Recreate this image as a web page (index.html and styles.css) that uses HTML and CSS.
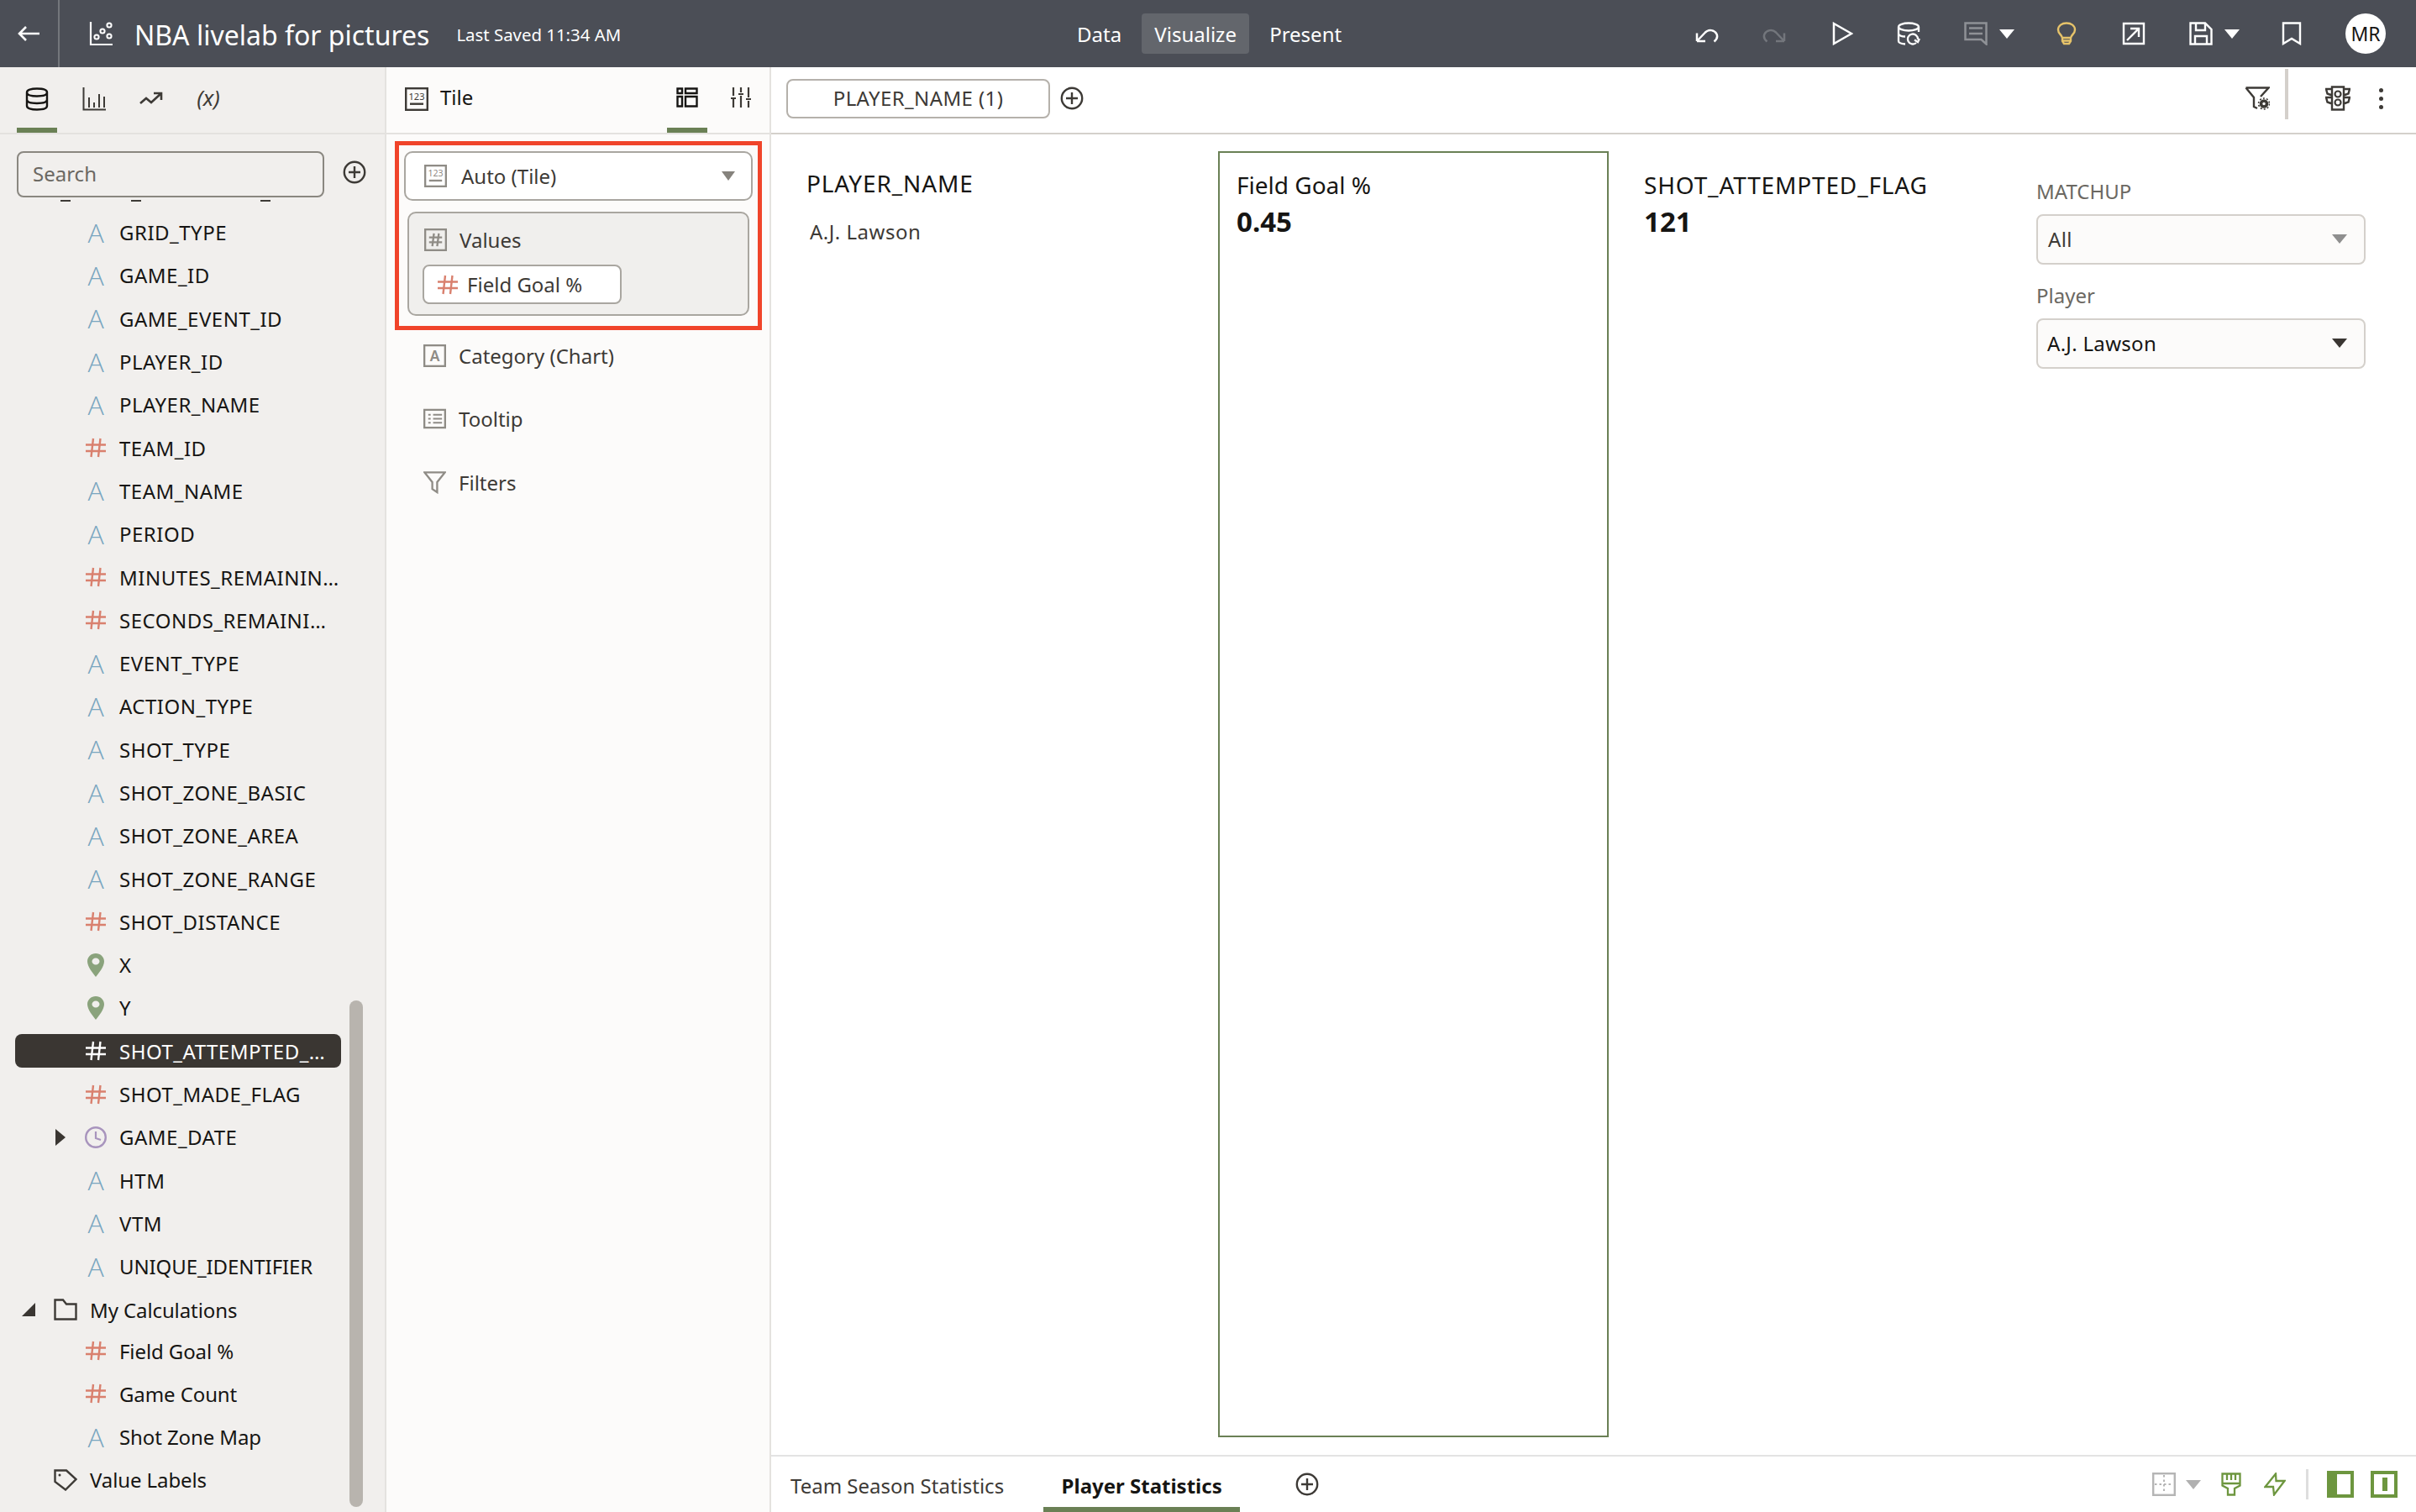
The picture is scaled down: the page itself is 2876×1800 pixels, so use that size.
FILE: index.html
```html
<!DOCTYPE html>
<html lang="en">
<head>
    <meta charset="UTF-8">
    <title>NBA livelab for pictures</title>
    <link rel="stylesheet" href="styles.css">
</head>
<body>
    <svg class="defs" width="0" height="0">
        <symbol id="hash" viewBox="0 0 24 24">
            <path d="M0 8.5H24M0 16H24M9 1L6.5 23M17.5 1L15 23" fill="none" stroke="currentColor" stroke-width="2.4"/>
        </symbol>
        <symbol id="pin" viewBox="0 0 20 28">
            <path fill-rule="evenodd" fill="currentColor" d="M10 0C4.5 0 0 4.2 0 9.5C0 15.5 6 23 10 28C14 23 20 15.5 20 9.5C20 4.2 15.500 0 10 0ZM10 5.500A4.500 4 0 1 1 10 13.500A4.500 4 0 1 1 10 5.500Z"/>
        </symbol>
        <symbol id="plus" viewBox="0 0 28 28">
            <circle cx="14" cy="14" r="12.200" fill="none" stroke="currentColor" stroke-width="2.400"/>
            <path d="M14 7V21M7 14H21" stroke="currentColor" stroke-width="2.400"/>
        </symbol>
    </svg>

    <div class="app">
        <header class="topbar">
            <div class="top-left">
                <div class="back">
                    <svg width="28" height="22" viewBox="0 0 28 22"><path d="M27 11H3M11 3L3 11L11 19" fill="none" stroke="#fff" stroke-width="2.600"/></svg>
                </div>
                <svg class="doc-icon" width="28" height="30" viewBox="0 0 28 30">
                    <path d="M2 1V28H28" fill="none" stroke="#fff" stroke-width="2.200"/>
                    <g fill="none" stroke="#fff" stroke-width="2"><circle cx="9" cy="19" r="2.600"/><circle cx="16" cy="12" r="2.600"/><circle cx="24" cy="18" r="2.600"/><circle cx="24" cy="5" r="2.600"/></g>
                </svg>
                <span class="doc-title">NBA livelab for pictures</span>
                <span class="saved">Last Saved 11:34 AM</span>
            </div>
            <nav class="modes">
                <span>Data</span>
                <span class="active">Visualize</span>
                <span>Present</span>
            </nav>
            <div class="top-right">
                <svg class="ti" viewBox="0 0 28 28"><path d="M2 23V13.500M2 23H12M2 23L12 12.500C16 8.500 23 9.500 25.500 14.500C27 18 25 21.500 22.500 23.500" fill="none" stroke="#fff" stroke-width="2.500"/></svg>
                <svg class="ti" viewBox="0 0 28 28"><path d="M26 23V13.500M26 23H16M26 23L16 12.500C12 8.500 5 9.500 2.500 14.500C1 18 3 21.500 5.500 23.500" fill="none" stroke="#73767c" stroke-width="2.500"/></svg>
                <svg class="ti" viewBox="0 0 28 28"><path d="M5 2L26 14L5 26Z" fill="none" stroke="#fff" stroke-width="2.500"/></svg>
                <svg class="ti" viewBox="0 0 28 28">
                    <ellipse cx="14" cy="6" rx="12" ry="4.500" fill="none" stroke="#fff" stroke-width="2.300"/>
                    <path d="M2 6V23C2 25 5 26 10 26.500M26 6V12M2 14.500C3 16.500 7 17.500 10 17.500" fill="none" stroke="#fff" stroke-width="2.300"/>
                    <path d="M25 21A6 6 0 1 0 23 25M27 20L25 24L21 21.500" fill="none" stroke="#fff" stroke-width="2.300"/>
                </svg>
                <div class="ti-group">
                    <svg class="ti" viewBox="0 0 28 28"><path d="M1.500 1.500H26.500V26.500L20.500 21H1.500Z M6 7.500H22M6 14H22" fill="none" stroke="#8f9196" stroke-width="2.500"/></svg>
                    <span class="caret caret-white"></span>
                </div>
                <svg class="ti" viewBox="0 0 28 28"><path d="M9 19C8 15 4 14 4 9.500C4 4.500 8.500 1.500 14 1.500C19.500 1.500 24 4.500 24 9.500C24 14 20 15 19 19ZM9 19V23L11 26H17L19 23V19M9 22.500H19" fill="none" stroke="#e6c36a" stroke-width="2.400"/></svg>
                <svg class="ti" viewBox="0 0 28 28"><path d="M2 2H26V26H2ZM6 22L20 8M10 8H20V18" fill="none" stroke="#fff" stroke-width="2.400"/></svg>
                <div class="ti-group">
                    <svg class="ti" viewBox="0 0 28 28"><path d="M1.500 1.500H19L26.500 9V26.500H1.500ZM8 2V10H19V2M7 26V17H21V26" fill="none" stroke="#fff" stroke-width="2.400"/></svg>
                    <span class="caret caret-white"></span>
                </div>
                <svg class="ti" viewBox="0 0 28 28"><path d="M4 1.500H24V26L14 20L4 26Z" fill="none" stroke="#fff" stroke-width="2.400"/></svg>
                <div class="avatar">MR</div>
            </div>
        </header>

        <div class="workspace">
            <aside class="data-panel">
                <div class="panel-tabs">
                    <div class="ptab on">
                        <svg width="28" height="28" viewBox="0 0 28 28"><path d="M2 6C2 3 7 1.500 14 1.500C21 1.500 26 3 26 6V22C26 25 21 26.500 14 26.500C7 26.500 2 25 2 22ZM2 6C2 9 7 10.500 14 10.500C21 10.500 26 9 26 6M2 14.500C2 17.500 7 19 14 19C21 19 26 17.500 26 14.500" fill="none" stroke="#161513" stroke-width="2.400"/></svg>
                    </div>
                    <div class="ptab">
                        <svg width="28" height="28" viewBox="0 0 28 28"><path d="M1.500 0V26.500H28M8 12V24M14 18V24M20 8V24M26 11V24" fill="none" stroke="#3d3a36" stroke-width="2"/></svg>
                    </div>
                    <div class="ptab">
                        <svg width="28" height="28" viewBox="0 0 28 28"><path d="M1 19L8 13L14 18L26 7M17 7H26V15" fill="none" stroke="#3d3a36" stroke-width="2.600"/></svg>
                    </div>
                    <div class="ptab vars">(x)</div>
                </div>
                <div class="search-row">
                    <div class="search">Search</div>
                    <svg class="add" width="28" height="28"><use href="#plus"/></svg>
                </div>
                <div class="clipped"><i></i><i></i><i></i></div>
                <div class="field-list">
                    <div class="row"><span class="ic-a">A</span><span>GRID_TYPE</span></div>
                    <div class="row"><span class="ic-a">A</span><span>GAME_ID</span></div>
                    <div class="row"><span class="ic-a">A</span><span>GAME_EVENT_ID</span></div>
                    <div class="row"><span class="ic-a">A</span><span>PLAYER_ID</span></div>
                    <div class="row"><span class="ic-a">A</span><span>PLAYER_NAME</span></div>
                    <div class="row"><svg class="ic ic-num"><use href="#hash"/></svg><span>TEAM_ID</span></div>
                    <div class="row"><span class="ic-a">A</span><span>TEAM_NAME</span></div>
                    <div class="row"><span class="ic-a">A</span><span>PERIOD</span></div>
                    <div class="row"><svg class="ic ic-num"><use href="#hash"/></svg><span>MINUTES_REMAININ…</span></div>
                    <div class="row"><svg class="ic ic-num"><use href="#hash"/></svg><span>SECONDS_REMAINI…</span></div>
                    <div class="row"><span class="ic-a">A</span><span>EVENT_TYPE</span></div>
                    <div class="row"><span class="ic-a">A</span><span>ACTION_TYPE</span></div>
                    <div class="row"><span class="ic-a">A</span><span>SHOT_TYPE</span></div>
                    <div class="row"><span class="ic-a">A</span><span>SHOT_ZONE_BASIC</span></div>
                    <div class="row"><span class="ic-a">A</span><span>SHOT_ZONE_AREA</span></div>
                    <div class="row"><span class="ic-a">A</span><span>SHOT_ZONE_RANGE</span></div>
                    <div class="row"><svg class="ic ic-num"><use href="#hash"/></svg><span>SHOT_DISTANCE</span></div>
                    <div class="row"><svg class="ic ic-pin"><use href="#pin"/></svg><span>X</span></div>
                    <div class="row"><svg class="ic ic-pin"><use href="#pin"/></svg><span>Y</span></div>
                    <div class="row selected"><svg class="ic"><use href="#hash"/></svg><span>SHOT_ATTEMPTED_…</span></div>
                    <div class="row"><svg class="ic ic-num"><use href="#hash"/></svg><span>SHOT_MADE_FLAG</span></div>
                    <div class="row row-date">
                        <i class="tw-right"></i>
                        <svg class="ic" viewBox="0 0 26 26"><circle cx="13" cy="13" r="11.800" fill="none" stroke="#a894bd" stroke-width="2.400"/><path d="M13 6V14L19 16" fill="none" stroke="#a894bd" stroke-width="2.200"/></svg>
                        <span>GAME_DATE</span>
                    </div>
                    <div class="row"><span class="ic-a">A</span><span>HTM</span></div>
                    <div class="row"><span class="ic-a">A</span><span>VTM</span></div>
                    <div class="row plain"><span class="ic-a">A</span><span>UNIQUE_IDENTIFIER</span></div>
                    <div class="row row-folder plain calc-head">
                        <i class="tw-open"></i>
                        <svg width="28" height="26" viewBox="0 0 28 26"><path d="M1.500 24.500V1.500H11L15 6.500H26.500V24.500Z" fill="none" stroke="#3d3a36" stroke-width="2.400"/></svg>
                        <span>My Calculations</span>
                    </div>
                    <div class="row plain"><svg class="ic ic-num"><use href="#hash"/></svg><span>Field Goal %</span></div>
                    <div class="row plain"><svg class="ic ic-num"><use href="#hash"/></svg><span>Game Count</span></div>
                    <div class="row plain"><span class="ic-a">A</span><span>Shot Zone Map</span></div>
                    <div class="row row-folder plain">
                        <i class="tw-none"></i>
                        <svg width="28" height="26" viewBox="0 0 28 26"><path d="M1.500 1.500H15L26.500 12L14 24.500L1.500 15Z" fill="none" stroke="#3d3a36" stroke-width="2.400"/><circle cx="7" cy="7" r="1.500" fill="#3d3a36"/></svg>
                        <span>Value Labels</span>
                    </div>
                    <div class="scroll-thumb"></div>
                </div>
            </aside>

            <aside class="grammar-panel">
                <div class="grammar-head">
                    <svg width="28" height="28" viewBox="0 0 28 28">
                        <rect x="1.200" y="1.200" width="25.600" height="25.600" fill="none" stroke="#3d3a36" stroke-width="2.400"/>
                        <text x="14" y="15" class="num-icon" fill="#3d3a36">123</text>
                        <rect x="6" y="18.500" width="16" height="2.400" fill="#3d3a36"/>
                    </svg>
                    <span class="grammar-title">Tile</span>
                    <div class="ptab on wide">
                        <svg width="26" height="24" viewBox="0 0 26 24"><path d="M1.500 1.500H7V7H1.500ZM11 1.500H24.500V7H11ZM1.500 11H7V22.500H1.500ZM11 11H24.500V22.500H11Z" fill="none" stroke="#161513" stroke-width="2.400"/></svg>
                    </div>
                    <div class="ptab wide">
                        <svg width="24" height="24" viewBox="0 0 24 24"><path d="M3 0V10M3 14V24M12 0V6M12 10V24M21 0V12M21 16V24M0 13H6M9 8H15M18 14H24" fill="none" stroke="#3d3a36" stroke-width="2.200"/></svg>
                    </div>
                </div>
                <div class="highlight">
                    <div class="viz-select">
                        <svg class="gi" viewBox="0 0 28 28">
                            <rect x="1.200" y="1.200" width="25.600" height="25.600" fill="none" stroke="#8f8c86" stroke-width="2.400"/>
                            <text x="14" y="15" class="num-icon" fill="#8f8c86">123</text>
                            <rect x="6" y="18.500" width="16" height="2.400" fill="#8f8c86"/>
                        </svg>
                        <span>Auto (Tile)</span>
                        <i class="caret caret-grey"></i>
                    </div>
                    <div class="values-box">
                        <div class="slot-title">
                            <svg class="gi" viewBox="0 0 28 28">
                                <rect x="1.200" y="1.200" width="25.600" height="25.600" fill="none" stroke="#8f8c86" stroke-width="2.400"/>
                                <path d="M6 11H22M6 17H22M12 6L10 22M18 6L16 22" fill="none" stroke="#8f8c86" stroke-width="2.400"/>
                            </svg>
                            <span>Values</span>
                        </div>
                        <div class="value-pill"><svg class="ic ic-num"><use href="#hash"/></svg><span>Field Goal %</span></div>
                    </div>
                </div>
                <div class="slot">
                    <svg class="gi" viewBox="0 0 28 28">
                        <rect x="1.200" y="1.200" width="25.600" height="25.600" fill="none" stroke="#8f8c86" stroke-width="2.400"/>
                        <text x="14" y="21" class="a-icon" fill="#8f8c86">A</text>
                    </svg>
                    <span>Category (Chart)</span>
                </div>
                <div class="slot">
                    <svg class="gi" viewBox="0 0 28 28">
                        <rect x="1.200" y="3" width="25.600" height="22" fill="none" stroke="#8f8c86" stroke-width="2.400"/>
                        <path d="M6 9H9M12 9H23M6 14H9M12 14H23M6 19H9M12 19H23" stroke="#8f8c86" stroke-width="2"/>
                    </svg>
                    <span>Tooltip</span>
                </div>
                <div class="slot">
                    <svg class="gi" viewBox="0 0 28 28"><path d="M1.500 1.500H26.500L17 13.500V26L11 22V13.500Z" fill="none" stroke="#8f8c86" stroke-width="2.400"/></svg>
                    <span>Filters</span>
                </div>
            </aside>

            <main class="report">
                <div class="filter-bar">
                    <div class="filter-pill">PLAYER_NAME (1)</div>
                    <svg class="add" width="28" height="28"><use href="#plus"/></svg>
                    <div class="filter-tools">
                        <svg width="30" height="28" viewBox="0 0 30 28"><path d="M1.500 1.500H28.500L19 12M1.500 1.500L11 13V24L15 26" fill="none" stroke="#3d3a36" stroke-width="2.400"/><circle cx="23" cy="20.500" r="3.500" fill="none" stroke="#3d3a36" stroke-width="3.500"/><circle cx="23" cy="20.500" r="6.500" fill="none" stroke="#3d3a36" stroke-width="1.600" stroke-dasharray="2 2.100"/></svg>
                        <div class="tool-sep"></div>
                        <svg width="30" height="30" viewBox="0 0 30 30"><path d="M8 1.500H22V28.500H8ZM8 4H1L2.500 9.500L8 11.500M22 4H29L27.500 9.500L22 11.500M8 14H1L2.500 19.500L8 21.500M22 14H29L27.500 19.500L22 21.500" fill="none" stroke="#3d3a36" stroke-width="2.400"/><circle cx="15" cy="10" r="3.500" fill="none" stroke="#3d3a36" stroke-width="2.200"/><circle cx="15" cy="20" r="3.500" fill="none" stroke="#3d3a36" stroke-width="2.200"/></svg>
                        <div class="kebab"><i></i><i></i><i></i></div>
                    </div>
                </div>
                <div class="canvas">
                    <section class="viz viz-table">
                        <h3 class="caps">PLAYER_NAME</h3>
                        <p>A.J. Lawson</p>
                    </section>
                    <section class="viz viz-tile">
                        <h3>Field Goal %</h3>
                        <strong>0.45</strong>
                    </section>
                    <section class="viz viz-shots">
                        <h3 class="caps">SHOT_ATTEMPTED_FLAG</h3>
                        <strong>121</strong>
                    </section>
                    <section class="viz-filters">
                        <label>MATCHUP</label>
                        <div class="dropdown muted"><span>All</span><i class="caret caret-light"></i></div>
                        <label>Player</label>
                        <div class="dropdown"><span>A.J. Lawson</span><i class="caret caret-dark"></i></div>
                    </section>
                </div>
                <footer class="canvas-tabs">
                    <span class="ctab">Team Season Statistics</span>
                    <span class="ctab current">Player Statistics</span>
                    <svg class="add" width="28" height="28"><use href="#plus"/></svg>
                    <div class="status-tools">
                        <svg width="28" height="28" viewBox="0 0 28 28"><rect x="1.200" y="1.200" width="25.600" height="25.600" fill="none" stroke="#b5b5b5" stroke-width="2.400"/><path d="M14 3V25M3 14H25" stroke="#b5b5b5" stroke-width="2" stroke-dasharray="2.500 3"/></svg>
                        <i class="caret caret-mute"></i>
                        <svg class="brush" width="24" height="28" viewBox="0 0 24 28"><path d="M1.500 1.500H22.500V15.500L16 19V26.500H8V19L1.500 15.500ZM7 2V9M12 2V9M17 2V9M2 13H22" fill="none" stroke="#6d963f" stroke-width="2.300"/></svg>
                        <svg class="bolt" width="26" height="28" viewBox="0 0 26 28"><path d="M14 1.500L1.500 17H11L12 26.500L24.500 10H14.500Z" fill="none" stroke="#6d963f" stroke-width="2.300"/></svg>
                        <div class="status-sep"></div>
                        <div class="panel-toggle left-on"></div>
                        <div class="panel-toggle mid-on"></div>
                    </div>
                </footer>
            </main>
        </div>
    </div>
</body>
</html>
```

FILE: styles.css
```css
* {
    box-sizing: border-box;
}
body {
    margin: 0;
    font-family: "Noto Sans", "Open Sans", sans-serif;
    font-size: 24px;
    color: #161513;
    background: #fff;
}
.defs {
    display: none;
}
.app {
    width: 2876px;
    height: 1800px;
    display: flex;
    flex-direction: column;
    overflow: hidden;
}

/* top bar */
.topbar {
    height: 80px;
    flex: none;
    display: flex;
    align-items: center;
    background: #4b4e56;
    color: #fff;
}
.top-left {
    width: 1269px;
    height: 100%;
    display: flex;
    align-items: center;
}
.back {
    width: 71px;
    height: 100%;
    display: flex;
    align-items: center;
    padding-left: 20px;
    border-right: 2px solid #73767c;
}
.doc-icon {
    margin-left: 35px;
}
.doc-title {
    margin-left: 26px;
    padding-top: 2px;
    font-size: 32px;
}
.saved {
    margin-left: 32px;
    padding-top: 2px;
    font-size: 20.4px;
}
.modes {
    display: flex;
    align-items: center;
}
.modes span {
    height: 48px;
    line-height: 50px;
    padding: 0 13px;
    border-radius: 4px;
}
.modes .active {
    width: 128px;
    margin: 0 11px;
    background: #63666c;
    text-align: center;
    padding: 0;
}
.top-right {
    margin-left: auto;
    padding-right: 36px;
    display: flex;
    align-items: center;
    gap: 52px;
}
.ti {
    width: 28px;
    height: 28px;
    display: block;
}
.ti-group {
    width: 60px;
    margin-right: -4px;
    display: flex;
    align-items: center;
    justify-content: space-between;
}
.avatar {
    width: 48px;
    height: 48px;
    margin-left: -2px;
    border-radius: 50%;
    background: #fff;
    color: #161513;
    text-align: center;
    line-height: 48px;
    font-size: 23px;
}

/* carets */
.caret {
    display: block;
    width: 0;
    height: 0;
    border-left: 9px solid transparent;
    border-right: 9px solid transparent;
    border-top: 11px solid #fff;
}
.caret-grey {
    border-left-width: 8px;
    border-right-width: 8px;
    border-top-color: #86837d;
}
.caret-light {
    border-top-color: #8f8f8f;
}
.caret-dark {
    border-top-color: #3a3632;
}
.caret-mute {
    border-top-color: #b0b0b0;
}

.workspace {
    flex: 1;
    display: flex;
    min-height: 0;
}

/* data panel */
.data-panel {
    width: 460px;
    flex: none;
    background: #f1efed;
    border-right: 2px solid #e4e2df;
    display: flex;
    flex-direction: column;
}
.panel-tabs {
    height: 80px;
    flex: none;
    display: flex;
    padding-left: 20px;
    gap: 20px;
    border-bottom: 2px solid #e4e2df;
}
.ptab {
    width: 48px;
    height: 78px;
    padding-top: 24px;
    display: flex;
    justify-content: center;
    border-bottom: 6px solid transparent;
}
.ptab.on {
    border-bottom-color: #6a8055;
}
.ptab.vars {
    font-style: italic;
    font-size: 26px;
    padding-top: 18px;
    color: #3d3a36;
}
.search-row {
    display: flex;
    align-items: flex-start;
    padding: 20px 0 0 20px;
}
.search {
    width: 366px;
    height: 55px;
    padding-left: 17px;
    line-height: 50px;
    border: 2px solid #8a8780;
    border-radius: 8px;
    color: #6b6862;
}
.search-row .add {
    margin: 11px 0 0 22px;
    color: #3d3a36;
}
.clipped {
    height: 16px;
    flex: none;
    display: flex;
    align-items: flex-start;
    padding: 3px 0 0 72px;
}
.clipped i {
    width: 12px;
    height: 2px;
    background: #3d3a36;
}
.clipped i:nth-child(2) {
    margin-left: 72px;
}
.clipped i:nth-child(3) {
    margin-left: 142px;
}
.field-list {
    position: relative;
    flex: 1;
    min-height: 0;
}
.row {
    height: 51.3px;
    padding-left: 102px;
    display: flex;
    align-items: center;
    gap: 16px;
    white-space: nowrap;
    letter-spacing: 0.5px;
}
.row.plain {
    letter-spacing: -0.1px;
}
.row.calc-head {
    margin-bottom: -2.3px;
}
.ic {
    width: 24px;
    height: 24px;
    flex: none;
}
.ic-num {
    color: #d9806e;
}
.ic-pin {
    color: #8aa37c;
    height: 28px;
}
.ic-a {
    width: 24px;
    flex: none;
    text-align: center;
    color: #79a6c0;
    font-size: 32px;
    line-height: 30px;
    letter-spacing: 0;
    font-family: "Open Sans", sans-serif;
    font-weight: 300;
}
.row.selected {
    height: 40px;
    margin: 5.65px 52px 5.65px 18px;
    padding-left: 84px;
    border-radius: 8px;
    background: #3a3632;
    color: #fff;
}
.row-date {
    padding-left: 66px;
    gap: 0;
}
.row-date .ic {
    width: 26px;
    height: 26px;
    margin-right: 15px;
}
.tw-right {
    width: 0;
    height: 0;
    margin-right: 23px;
    border-top: 10px solid transparent;
    border-bottom: 10px solid transparent;
    border-left: 12px solid #3a3632;
}
.row-folder {
    padding-left: 26px;
    gap: 0;
}
.row-folder svg {
    margin-right: 15px;
    flex: none;
}
.tw-open {
    width: 16px;
    margin-right: 22px;
    height: 0;
    border-bottom: 16px solid #3a3632;
    border-left: 16px solid transparent;
}
.tw-none {
    width: 16px;
    margin-right: 22px;
}
.scroll-thumb {
    position: absolute;
    left: 416px;
    top: 940px;
    width: 16px;
    height: 603px;
    border-radius: 8px;
    background: #b8b4ae;
}

/* grammar panel */
.grammar-panel {
    width: 458px;
    flex: none;
    background: #fcfbfa;
    border-right: 2px solid #e4e2df;
}
.grammar-head {
    height: 80px;
    display: flex;
    padding-left: 22px;
    border-bottom: 2px solid #e4e2df;
}
.grammar-head > svg {
    margin-top: 24px;
}
.grammar-title {
    margin: 16px auto 0 14px;
    line-height: 40px;
}
.ptab.wide {
    margin-right: 16px;
}
.ptab.wide:last-child {
    margin-right: 10px;
}
.highlight {
    width: 437px;
    height: 225px;
    margin: 8px 0 0 10px;
    padding: 7px 6px;
    border: 5px solid #f0442a;
}
.viz-select {
    width: 415px;
    height: 59px;
    display: flex;
    align-items: center;
    padding: 0 19px 0 22px;
    background: #fff;
    border: 2px solid #a9a6a0;
    border-radius: 10px;
}
.viz-select span {
    margin-left: 17px;
    flex: 1;
    color: #3d3a36;
}
.gi {
    width: 27px;
    height: 27px;
    flex: none;
}
.num-icon {
    font-size: 11px;
    text-anchor: middle;
    font-family: "Noto Sans", sans-serif;
}
.a-icon {
    font-size: 18px;
    font-weight: 600;
    text-anchor: middle;
    font-family: "Noto Sans", sans-serif;
}
.values-box {
    width: 407px;
    height: 124px;
    margin: 13px 0 0 4px;
    padding: 18px 16px;
    background: #f0efed;
    border: 2px solid #a9a6a0;
    border-radius: 10px;
}
.slot-title {
    height: 27px;
    display: flex;
    align-items: center;
    padding-left: 2px;
    gap: 15px;
    color: #3d3a36;
}
.value-pill {
    width: 237px;
    height: 47px;
    margin-top: 16px;
    display: flex;
    align-items: center;
    gap: 11px;
    padding-left: 16px;
    background: #fff;
    border: 2px solid #a9a6a0;
    border-radius: 8px;
    color: #3d3a36;
}
.slot {
    height: 60px;
    margin-bottom: 15.5px;
    display: flex;
    align-items: center;
    gap: 15px;
    padding-left: 44px;
    color: #3d3a36;
}

/* report area */
.report {
    flex: 1;
    min-width: 0;
    display: flex;
    flex-direction: column;
    background: #fff;
}
.filter-bar {
    height: 80px;
    flex: none;
    display: flex;
    align-items: center;
    padding: 0 0 4px 18px;
    border-bottom: 2px solid #d4d0cb;
}
.filter-pill {
    width: 314px;
    height: 47px;
    line-height: 41px;
    text-align: center;
    letter-spacing: 0.4px;
    border: 2px solid #b5b1ab;
    border-radius: 8px;
    color: #3d3a36;
}
.filter-bar .add {
    margin-left: 12px;
    color: #3d3a36;
}
.filter-tools {
    margin-left: auto;
    padding-right: 38px;
    height: 100%;
    display: flex;
    align-items: center;
}
.tool-sep {
    width: 4px;
    height: 60px;
    margin: -10px 44px 0 18px;
    background: #d4d0cb;
}
.kebab {
    width: 6px;
    margin-left: 34px;
    display: flex;
    flex-direction: column;
    gap: 5px;
}
.kebab i {
    width: 5px;
    height: 5px;
    border-radius: 50%;
    background: #3d3a36;
}
.canvas {
    flex: 1;
    min-height: 0;
    display: grid;
    grid-template-columns: 532px 465px 509px 392px;
    padding: 20px 0 21px;
}
.viz h3 {
    margin: 0;
    font-size: 28px;
    font-weight: 400;
    line-height: 40px;
}
.viz h3.caps {
    letter-spacing: 0.85px;
}
.viz strong {
    display: block;
    margin-top: 2px;
    font-size: 33px;
    line-height: 44px;
}
.viz-table {
    padding: 18px 0 0 42px;
}
.viz-table p {
    margin: 18px 0 0 4px;
    line-height: 40px;
    letter-spacing: 0.5px;
    color: #3d3a36;
}
.viz-tile {
    padding: 18px 0 0 20px;
    border: 2px solid #6a8055;
}
.viz-shots {
    padding: 20px 0 0 42px;
}
.viz-filters label {
    display: block;
    height: 40px;
    line-height: 40px;
    color: #6b6862;
}
.viz-filters {
    padding-top: 28px;
}
.dropdown {
    height: 60px;
    margin: 7px 0 17px;
    display: flex;
    align-items: center;
    justify-content: space-between;
    padding: 0 20px 2px 11px;
    letter-spacing: 0.3px;
    background: #fcfbfa;
    border: 2px solid #d4d0cb;
    border-radius: 8px;
}
.dropdown.muted {
    padding-left: 12px;
    color: #3d3a36;
}
.canvas-tabs {
    height: 68px;
    flex: none;
    display: flex;
    align-items: center;
    padding-left: 23px;
    border-top: 2px solid #e3e3e3;
}
.ctab {
    color: #3d3a36;
    height: 100%;
    line-height: 70px;
    border-bottom: 6px solid transparent;
}
.ctab.current {
    width: 234px;
    margin-left: 47px;
    text-align: center;
    font-weight: 700;
    color: #161513;
    border-bottom-color: #6a8055;
}
.canvas-tabs .add {
    margin-left: 66px;
    color: #3d3a36;
}
.status-tools {
    margin-left: auto;
    padding-right: 22px;
    display: flex;
    align-items: center;
}
.status-tools .caret {
    margin-left: 12px;
}
.brush {
    margin-left: 24px;
}
.bolt {
    margin-left: 27px;
}
.status-sep {
    width: 3px;
    height: 36px;
    margin: 0 22px 0 24px;
    background: #dedede;
}
.panel-toggle {
    width: 32px;
    height: 32px;
    border: 4px solid #6d963f;
}
.panel-toggle.left-on {
    border-left-width: 12px;
}
.panel-toggle.mid-on {
    margin-left: 20px;
    background: linear-gradient(#6d963f, #6d963f) 10px 4px / 6px 16px no-repeat;
}
```
